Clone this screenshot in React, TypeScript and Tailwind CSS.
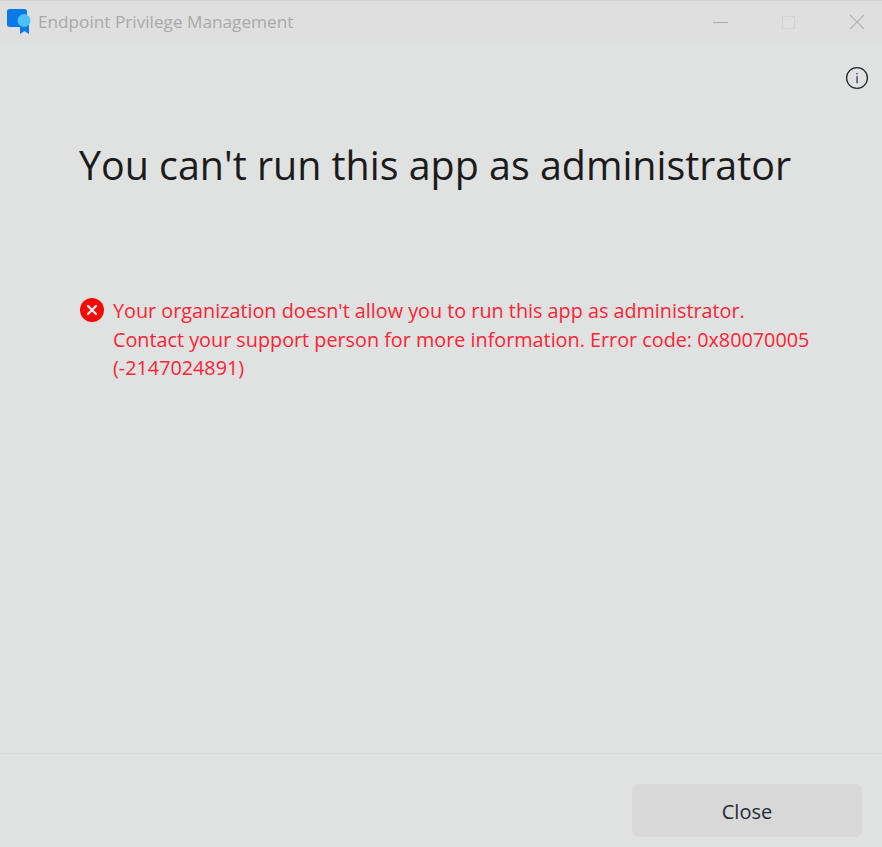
export default function App() {
  return (
    <div className="flex h-[847px] w-[882px] flex-col overflow-hidden bg-[#e0e1e1] font-['Open_Sans',sans-serif]">
      {/* title bar */}
      <div className="flex h-[43px] shrink-0 items-center border-t border-[#d2d2d2] bg-[#dfdfdf] pl-[6px]">
        <svg width="26" height="26" viewBox="0 0 26 26" className="shrink-0">
          <rect x="1" y="0" width="20" height="18" rx="2.5" fill="#0a78e6" />
          <path d="M14 14v11l4.5-3 4.5 3V14z" fill="#0a78e6" />
          <circle cx="18" cy="11.5" r="6.5" fill="#4cc2f4" />
        </svg>
        <span className="ml-[6px] text-[17.2px] text-[#a9a9a9]">Endpoint Privilege Management</span>
        <div className="ml-auto flex items-center">
          <div className="mr-[54px] h-px w-[15px] bg-[#ababab]" />
          <div className="mr-[54px] h-[13px] w-[13px] border border-[#d3d3d3]" />
          <svg width="16" height="16" viewBox="0 0 16 16" className="mr-[17px]">
            <path d="M1 1l14 14M15 1L1 15" stroke="#b4b4b4" strokeWidth="1.2" fill="none" />
          </svg>
        </div>
      </div>

      {/* body */}
      <div className="flex min-h-0 flex-1 flex-col">
        <div className="flex justify-end pr-[13px] pt-[23px]">
          <svg width="24" height="24" viewBox="0 0 24 24">
            <circle cx="12" cy="12" r="10.4" stroke="#26262c" strokeWidth="1.3" fill="none" />
            <rect x="11.4" y="10.2" width="1.3" height="7" fill="#3b2a6e" />
            <rect x="11.4" y="7" width="1.3" height="1.5" fill="#3b2a6e" />
          </svg>
        </div>
        <h1 className="ml-[79px] mt-[48px] text-[39.4px] leading-[54px] text-[#1b1b1b]">
          You can't run this app as administrator
        </h1>
        <div className="ml-[80px] mt-[105px] flex">
          <svg width="24" height="24" viewBox="0 0 24 24" className="mt-[1px] shrink-0">
            <circle cx="12" cy="12" r="12" fill="#f50a0a" />
            <path d="M8 8l8 8M16 8l-8 8" stroke="#f7e9e9" strokeWidth="2.4" strokeLinecap="round" fill="none" />
          </svg>
          <p className="ml-[9px] w-[740px] text-[19.8px] leading-[28.5px] text-[#fb2434]">
            Your organization doesn't allow you to run this app as administrator.
            <br />
            Contact your support person for more information. Error code: 0x80070005
            <br />
            (-2147024891)
          </p>
        </div>
      </div>

      {/* footer */}
      <div className="flex h-[94px] shrink-0 items-start justify-end border-t border-[#d8d8d8] pr-[20px] pt-[30px]">
        <button className="h-[53px] w-[230px] rounded-[7px] bg-[#d8d8d8] pt-[2px] text-[20px] text-[#1f2a36]">
          Close
        </button>
      </div>
    </div>
  );
}
